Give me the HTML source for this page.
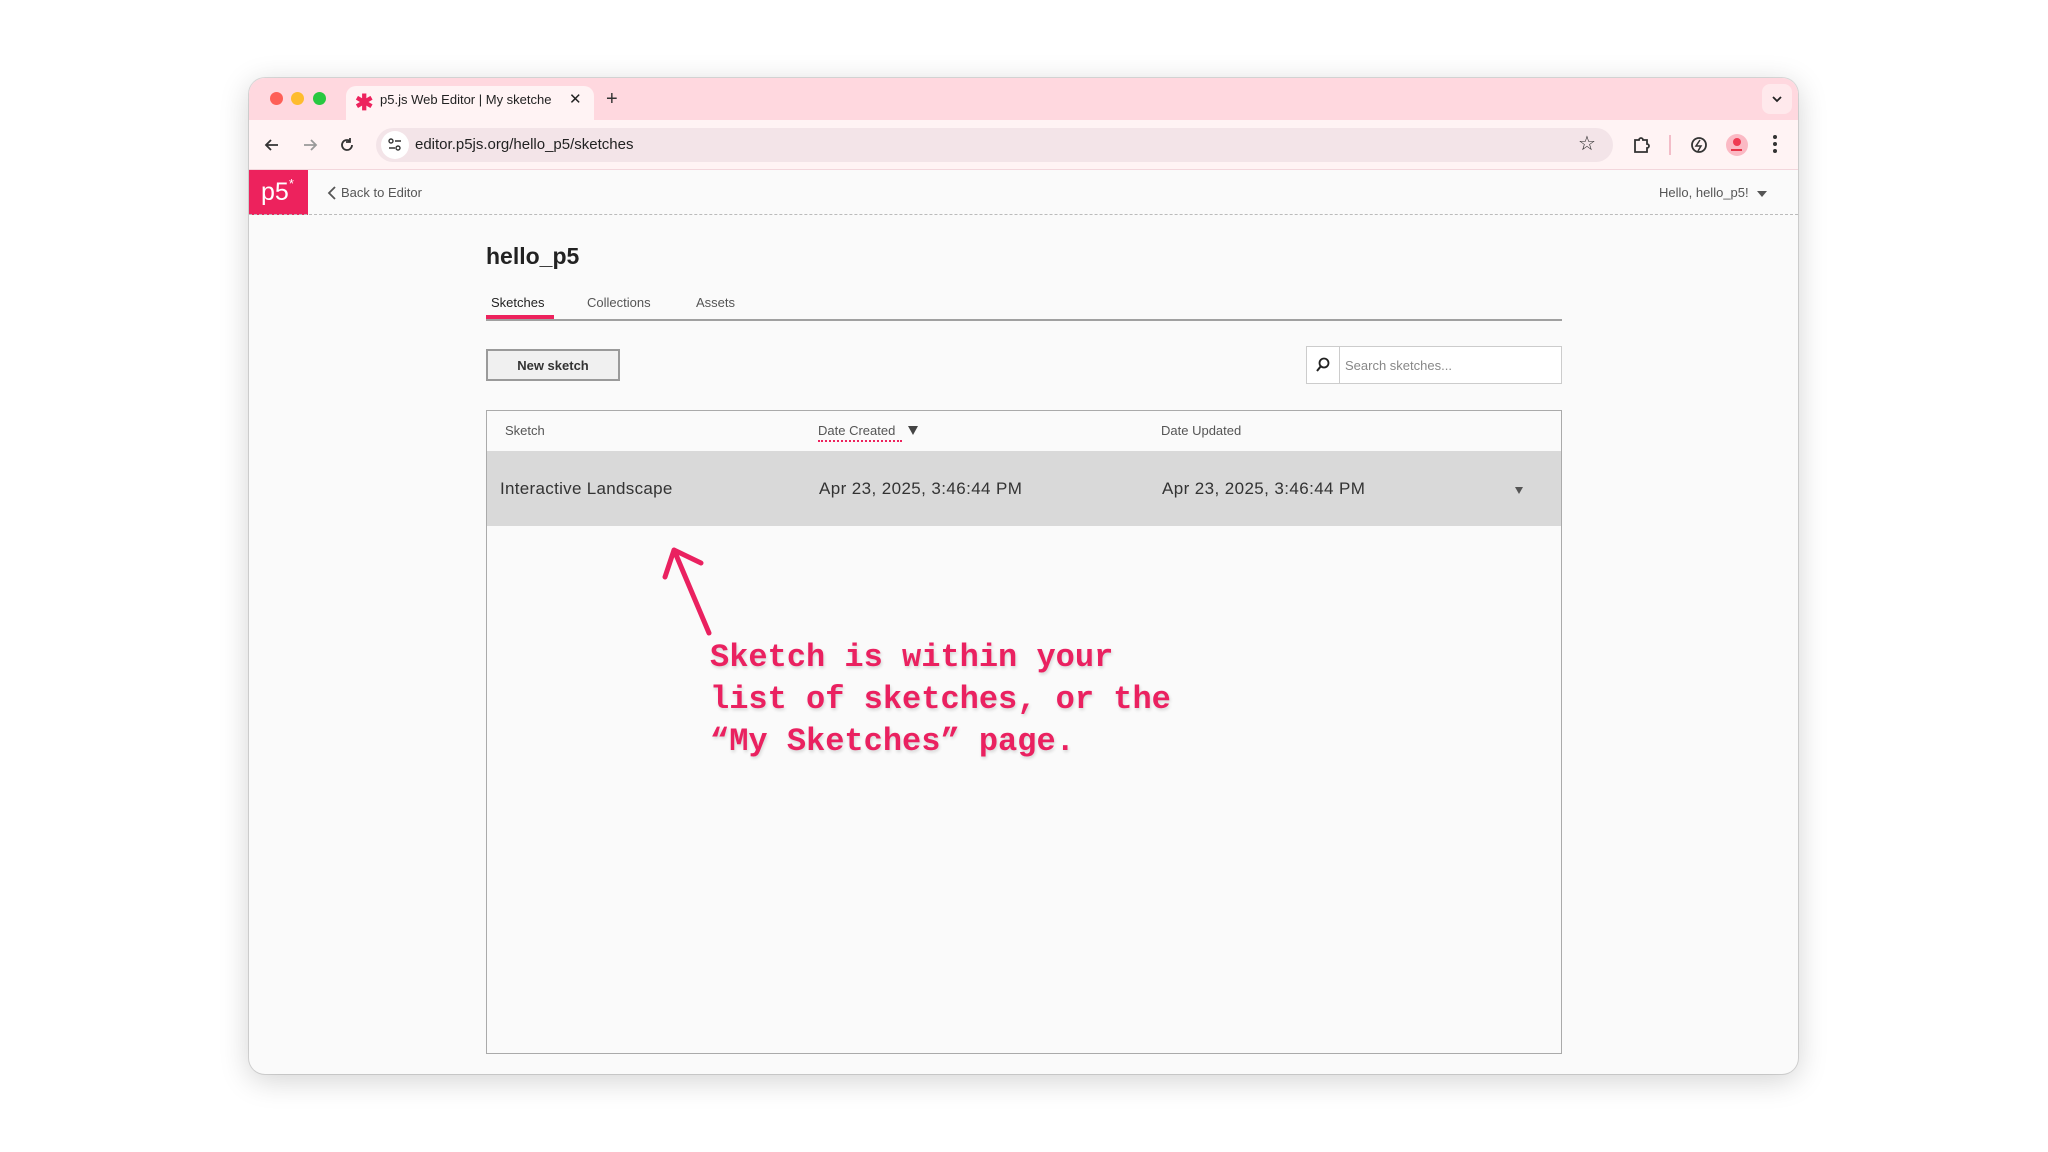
<!DOCTYPE html>
<html><head><meta charset="utf-8"><style>
*{box-sizing:border-box;margin:0;padding:0}
body{width:2048px;height:1152px;background:#fff;position:relative;overflow:hidden;font-family:"Liberation Sans",sans-serif}
.a{position:absolute}
.win{left:249px;top:78px;width:1549px;height:996px;border-radius:16px;overflow:hidden;background:#fafafa;box-shadow:0 6px 30px rgba(0,0,0,.18),0 0 0 1px rgba(0,0,0,.12)}
.t{white-space:nowrap}
</style></head><body>
<div class="a win">
  <div class="a" style="left:0;top:0;width:1549px;height:42px;background:#ffd8df"></div>
  <div class="a" style="left:0;top:42px;width:1549px;height:50px;background:#fff3f4;border-bottom:1px solid #f3d6dc"></div>
  <div class="a" style="left:21px;top:14px;width:13px;height:13px;border-radius:50%;background:#fe5f57"></div>
  <div class="a" style="left:42px;top:14px;width:13px;height:13px;border-radius:50%;background:#febc2e"></div>
  <div class="a" style="left:64px;top:14px;width:13px;height:13px;border-radius:50%;background:#28c840"></div>
  <div class="a" style="left:97px;top:8px;width:248px;height:36px;background:#fff3f4;border-radius:10px 10px 0 0"></div>
  <div class="a t" style="left:106px;top:12px;font-size:22px;color:#ed225d;font-weight:bold">✱</div>
  <div class="a t" style="left:131px;top:14px;font-size:13px;color:#222;width:172px;overflow:hidden">p5.js Web Editor | My sketches</div>
  <div class="a t" style="left:320px;top:12px;font-size:15px;color:#222">✕</div>
  <div class="a t" style="left:357px;top:10px;font-size:20px;color:#333">+</div>
  <div class="a" style="left:1513px;top:6px;width:30px;height:30px;border-radius:8px;background:#ffe9ec"></div>
  <svg class="a" style="left:1522px;top:16px" width="12" height="10"><path d="M2 3l4 4 4-4" stroke="#222" stroke-width="1.8" fill="none"/></svg>
  <svg class="a" style="left:14px;top:58px" width="18" height="18"><path d="M15 9H3M8 4L3 9l5 5" stroke="#333" stroke-width="1.8" fill="none"/></svg>
  <svg class="a" style="left:52px;top:58px" width="18" height="18"><path d="M3 9h12M10 4l5 5-5 5" stroke="#999" stroke-width="1.8" fill="none"/></svg>
  <svg class="a" style="left:89px;top:58px" width="18" height="18"><path d="M14 9a5 5 0 1 1-2-4M12 2v4h-4" stroke="#333" stroke-width="1.8" fill="none"/></svg>
  <div class="a" style="left:127px;top:50px;width:1237px;height:34px;border-radius:17px;background:#f3e4e8"></div>
  <div class="a" style="left:132px;top:53px;width:28px;height:28px;border-radius:50%;background:#fff"></div>
  <svg class="a" style="left:138px;top:59px" width="16" height="16"><circle cx="4" cy="4" r="2" stroke="#333" stroke-width="1.4" fill="none"/><path d="M8 4h6M2 11h6" stroke="#333" stroke-width="1.4"/><circle cx="11" cy="11" r="2" stroke="#333" stroke-width="1.4" fill="none"/></svg>
  <div class="a t" style="left:166px;top:58px;font-size:15px;color:#222">editor.p5js.org/hello_p5/sketches</div>
  <div class="a t" style="left:1329px;top:53px;font-size:20px;color:#222">☆</div>
  <svg class="a" style="left:1383px;top:57px" width="20" height="20"><path d="M3 5h4a2 2 0 0 1 4 0h4v4a2 2 0 0 1 0 4v4H3z" stroke="#333" stroke-width="1.8" fill="none"/></svg>
  <div class="a" style="left:1420px;top:57px;width:1.5px;height:20px;background:#f3bcc8"></div>
  <svg class="a" style="left:1440px;top:57px" width="20" height="20"><circle cx="10" cy="10" r="7" stroke="#333" stroke-width="1.8" fill="none"/><path d="M11 5l-4 6h5l-3 5" stroke="#333" stroke-width="1.5" fill="none"/></svg>
  <div class="a" style="left:1477px;top:56px;width:22px;height:22px;border-radius:50%;background:#fbb9c4"></div>
  <div class="a" style="left:1484px;top:60px;width:8px;height:8px;border-radius:50%;background:#ef3a52"></div>
  <div class="a" style="left:1482px;top:71px;width:11px;height:2px;background:#e8344a"></div>
  <div class="a" style="left:1524px;top:57px;width:4px;height:4px;border-radius:50%;background:#333;box-shadow:0 7px 0 #333,0 14px 0 #333"></div>
  <div class="a" style="left:0;top:92px;width:59px;height:45px;background:#ed225d"></div>
  <div class="a t" style="left:12px;top:100px;font-size:25px;color:#fff">p5<sup style="font-size:13px;position:relative;top:-3px">*</sup></div>
  <svg class="a" style="left:78px;top:108px" width="10" height="14"><path d="M8 1L2 7l6 6" stroke="#555" stroke-width="1.8" fill="none"/></svg>
  <div class="a t" style="left:92px;top:107px;font-size:13px;color:#555">Back to Editor</div>
  <div class="a t" style="left:1410px;top:107px;font-size:13px;color:#555">Hello, hello_p5!</div>
  <div class="a" style="left:1508px;top:113px;border-left:5px solid transparent;border-right:5px solid transparent;border-top:6px solid #555"></div>
  <div class="a" style="left:0;top:136px;width:1549px;border-top:1.5px dashed #bbb"></div>
  <div class="a t" style="left:237px;top:165px;font-size:23px;font-weight:bold;color:#222">hello_p5</div>
  <div class="a t" style="left:242px;top:217px;font-size:13px;color:#222">Sketches</div>
  <div class="a t" style="left:338px;top:217px;font-size:13px;color:#555">Collections</div>
  <div class="a t" style="left:447px;top:217px;font-size:13px;color:#555">Assets</div>
  <div class="a" style="left:237px;top:241px;width:1076px;height:2px;background:#a0a0a0"></div>
  <div class="a" style="left:237px;top:237px;width:68px;height:4px;background:#ed225d"></div>
  <div class="a" style="left:237px;top:271px;width:134px;height:32px;background:#f0f0f0;border:2px solid #9a9a9a;font-size:13px;font-weight:bold;color:#333;text-align:center;line-height:29px">New sketch</div>
  <div class="a" style="left:1057px;top:268px;width:256px;height:38px;background:#fff;border:1px solid #ccc"></div>
  <div class="a" style="left:1090px;top:269px;width:1px;height:36px;background:#ccc"></div>
  <svg class="a" style="left:1065px;top:278px" width="18" height="18"><circle cx="10" cy="7" r="4.5" stroke="#222" stroke-width="1.8" fill="none"/><path d="M7 10l-4 5" stroke="#222" stroke-width="2"/></svg>
  <div class="a t" style="left:1096px;top:280px;font-size:13px;color:#888">Search sketches...</div>
  <div class="a" style="left:237px;top:332px;width:1076px;height:644px;border:1px solid #aaa;background:#fafafa"></div>
  <div class="a t" style="left:256px;top:345px;font-size:13px;color:#555">Sketch</div>
  <div class="a t" style="left:569px;top:345px;font-size:13px;color:#555">Date Created</div>
  <div class="a" style="left:569px;top:362px;width:84px;border-top:2px dotted #ed225d"></div>
  <div class="a" style="left:659px;top:348px;border-left:5px solid transparent;border-right:5px solid transparent;border-top:9px solid #444"></div>
  <div class="a t" style="left:912px;top:345px;font-size:13px;color:#555">Date Updated</div>
  <div class="a" style="left:238px;top:373px;width:1074px;height:75px;background:#d9d9d9"></div>
  <div class="a t" style="left:251px;top:401px;font-size:17px;color:#333;letter-spacing:0.3px">Interactive Landscape</div>
  <div class="a t" style="left:570px;top:401px;font-size:17px;color:#333;letter-spacing:0.4px">Apr 23, 2025, 3:46:44 PM</div>
  <div class="a t" style="left:913px;top:401px;font-size:17px;color:#333;letter-spacing:0.4px">Apr 23, 2025, 3:46:44 PM</div>
  <div class="a" style="left:1266px;top:409px;border-left:4px solid transparent;border-right:4px solid transparent;border-top:7px solid #555"></div>
</div>
<svg class="a" style="left:0;top:0" width="2048" height="1152">
  <g stroke="#ea2160" stroke-width="5" stroke-linecap="round" fill="none">
    <path d="M709 633L674 550M674 550L665 577M674 550L701 563"/>
  </g>
</svg>
<div class="a" style="left:710px;top:637px;font-family:'Liberation Mono',monospace;font-weight:bold;font-size:32px;line-height:42px;color:#ea2160;white-space:pre;text-shadow:1px 2px 3px rgba(0,0,0,.15)">Sketch is within your
list of sketches, or the
“My Sketches” page.</div>
</body></html>
